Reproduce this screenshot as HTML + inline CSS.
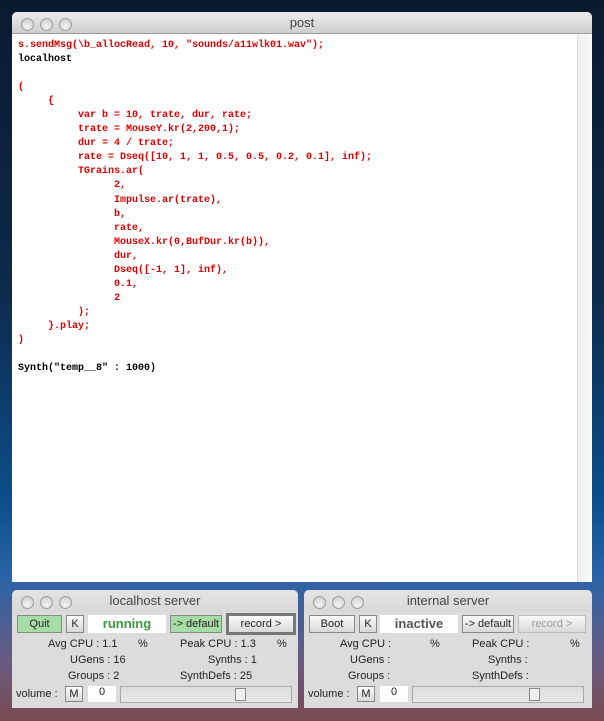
<!DOCTYPE html>
<html><head><style>
*{margin:0;padding:0;box-sizing:border-box}
body{width:604px;height:721px;overflow:hidden;position:relative;font-family:"Liberation Sans",sans-serif;
background:linear-gradient(180deg,#0a1a30 0%,#0d2a4a 40%,#0b4f8c 70%,#2a64a8 80%,#6a5a80 92%,#7a4a50 100%);}
.win{position:absolute;border-radius:5px 5px 0 0;overflow:hidden}
.title{height:22px;background:linear-gradient(#ececec,#cfcfcf);border-bottom:1px solid #9a9a9a;text-align:center;font-size:13px;color:#444;line-height:22px;position:relative}
.dots{position:absolute;left:9px;top:4px}
.dots span{display:inline-block;width:13px;height:13px;border-radius:50%;border:1px solid #9c9c9c;background:radial-gradient(circle at 50% 70%,#f4f4f4,#c8c8c8);margin-right:6px}
#post{left:12px;top:12px;width:580px;height:570px;background:#fff}
.code{position:absolute;left:6px;top:27px;font-family:"Liberation Mono",monospace;font-weight:bold;font-size:10px;line-height:14.04px;color:#e00000;white-space:pre}
.k{color:#000}
.sb{position:absolute;right:0;top:23px;width:15px;bottom:0;background:linear-gradient(90deg,#eee,#fafafa);border-left:1px solid #ddd}
.srv{background:#dcdcdc;height:118px;font-size:11px;color:#222}
.b{position:absolute;height:18px;border:1px solid #888;background:linear-gradient(#fafafa,#d8d8d8);text-align:center;line-height:16px;font-size:11px}
.g{background:#a6dca6}
.f{position:absolute;background:#fff;text-align:center;font-weight:bold;font-size:13px;line-height:18px;height:18px}
.t{position:absolute;font-size:11px}
.sl{position:absolute;height:17px;border:1px solid #aaa;background:linear-gradient(#ddd,#e8e8e8)}
.kn{position:absolute;top:1px;width:11px;height:13px;border:1px solid #888;background:#f0f0f0}
</style></head><body>
<div id="post" class="win">
<div class="title"><div class="dots"><span></span><span></span><span></span></div>post</div>
<div class="code">s.sendMsg(\b_allocRead, 10, "sounds/a11wlk01.wav");
<span class="k">localhost</span>

(
     {
          var b = 10, trate, dur, rate;
          trate = MouseY.kr(2,200,1);
          dur = 4 / trate;
          rate = Dseq([10, 1, 1, 0.5, 0.5, 0.2, 0.1], inf);
          TGrains.ar(
                2,
                Impulse.ar(trate),
                b,
                rate,
                MouseX.kr(0,BufDur.kr(b)),
                dur,
                Dseq([-1, 1], inf),
                0.1,
                2
          );
     }.play;
)

<span class="k">Synth("temp__8" : 1000)</span></div>
<div class="sb"></div>
</div>

<div class="win srv" style="left:12px;top:590px;width:286px">
<div class="title" style="border:none;background:linear-gradient(#e4e4e4,#d8d8d8)"><div class="dots"><span></span><span></span><span></span></div>localhost server</div>
<div class="b g" style="left:5px;top:25px;width:45px">Quit</div>
<div class="b" style="left:54px;top:25px;width:18px">K</div>
<div class="f" style="left:76px;top:25px;width:78px;color:#3a9a3a">running</div>
<div class="b g" style="left:158px;top:25px;width:52px">-&gt; default</div>
<div class="b" style="left:214px;top:23px;width:70px;height:22px;border:3px solid #777;line-height:16px">record &gt;</div>
<div class="t" style="left:36px;top:48px">Avg CPU : 1.1</div><div class="t" style="left:126px;top:48px">%</div>
<div class="t" style="left:168px;top:48px">Peak CPU : 1.3</div><div class="t" style="left:265px;top:48px">%</div>
<div class="t" style="left:58px;top:64px">UGens : 16</div>
<div class="t" style="left:196px;top:64px">Synths : 1</div>
<div class="t" style="left:56px;top:80px">Groups : 2</div>
<div class="t" style="left:168px;top:80px">SynthDefs : 25</div>
<div class="t" style="left:4px;top:98px">volume :</div>
<div class="b" style="left:53px;top:96px;width:18px;height:16px;line-height:14px">M</div>
<div class="f" style="left:76px;top:96px;width:28px;height:16px;font-weight:normal;font-size:11px;line-height:12px">0</div>
<div class="sl" style="left:108px;top:96px;width:172px"><div class="kn" style="left:114px"></div></div>
</div>

<div class="win srv" style="left:304px;top:590px;width:288px">
<div class="title" style="border:none;background:linear-gradient(#e4e4e4,#d8d8d8)"><div class="dots"><span></span><span></span><span></span></div>internal server</div>
<div class="b" style="left:5px;top:25px;width:46px">Boot</div>
<div class="b" style="left:55px;top:25px;width:18px">K</div>
<div class="f" style="left:76px;top:25px;width:78px;color:#555">inactive</div>
<div class="b" style="left:158px;top:25px;width:52px">-&gt; default</div>
<div class="b" style="left:214px;top:25px;width:68px;color:#999;border-color:#bbb">record &gt;</div>
<div class="t" style="left:36px;top:48px">Avg CPU :</div><div class="t" style="left:126px;top:48px">%</div>
<div class="t" style="left:168px;top:48px">Peak CPU :</div><div class="t" style="left:266px;top:48px">%</div>
<div class="t" style="left:46px;top:64px">UGens :</div>
<div class="t" style="left:184px;top:64px">Synths :</div>
<div class="t" style="left:44px;top:80px">Groups :</div>
<div class="t" style="left:168px;top:80px">SynthDefs :</div>
<div class="t" style="left:4px;top:98px">volume :</div>
<div class="b" style="left:53px;top:96px;width:18px;height:16px;line-height:14px">M</div>
<div class="f" style="left:76px;top:96px;width:28px;height:16px;font-weight:normal;font-size:11px;line-height:12px">0</div>
<div class="sl" style="left:108px;top:96px;width:172px"><div class="kn" style="left:116px"></div></div>
</div>
</body></html>
